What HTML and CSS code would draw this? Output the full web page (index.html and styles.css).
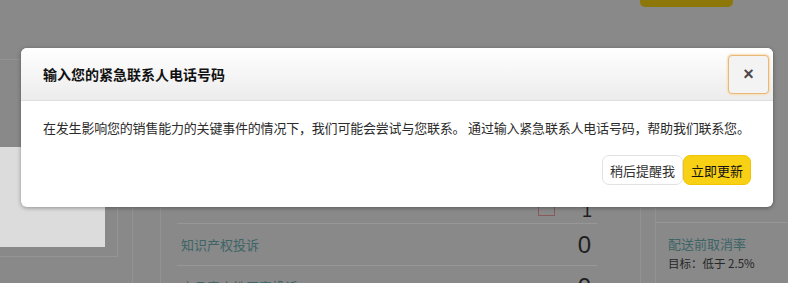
FILE: index.html
```html
<!DOCTYPE html>
<html lang="zh">
<head>
<meta charset="utf-8">
<link rel="stylesheet" href="styles.css">
</head>
<body>
<div class="page">
  <div class="topbar"><div class="top-btn"></div></div>
  <div class="cols">
    <div class="col-left">
      <div class="left-frame"><div class="light-box"></div></div>
    </div>
    <div class="gutter"></div>
    <div class="col-mid">
      <div class="mid-card">
        <div class="row row-first"><span class="flag"></span><span class="num small">1</span></div>
        <div class="row"><span class="link">知识产权投诉</span><span class="num">0</span></div>
        <div class="row"><span class="link">商品真实性买家投诉</span><span class="num">0</span></div>
      </div>
    </div>
    <div class="gutter2"></div>
    <div class="col-right">
      <div class="right-card">
        <div class="link">配送前取消率</div>
        <div class="target">目标：低于 2.5%</div>
      </div>
    </div>
  </div>
</div>

<div class="modal">
  <div class="modal-header">
    <h2 class="modal-title">输入您的紧急联系人电话号码</h2>
    <button class="close-btn">×</button>
  </div>
  <div class="modal-body">
    <p class="modal-text">在发生影响您的销售能力的关键事件的情况下，我们可能会尝试与您联系。 通过输入紧急联系人电话号码，帮助我们联系您。</p>
    <div class="actions">
      <button class="btn btn-later">稍后提醒我</button>
      <button class="btn btn-update">立即更新</button>
    </div>
  </div>
</div>
</body>
</html>
```

FILE: styles.css
```css
html, body {
  margin: 0;
  padding: 0;
}
body {
  width: 788px;
  height: 283px;
  overflow: hidden;
  background: #898989;
  font-family: "Noto Sans CJK SC", "Noto Sans", sans-serif;
  position: relative;
}
.page {
  width: 788px;
  height: 283px;
  overflow: hidden;
}
.topbar {
  height: 60px;
  position: relative;
  border-bottom: 1px solid #939393;
  box-sizing: border-box;
  width: 133px;
}
.top-btn {
  position: absolute;
  left: 640px;
  top: -6px;
  width: 93px;
  height: 13px;
  border-radius: 5px;
  background: #8c7708;
}
.cols {
  display: flex;
  height: 223px;
}
.col-left {
  width: 133px;
  border-right: 1px solid #939393;
  box-sizing: border-box;
  padding-top: 87px;
}
.left-frame {
  width: 118px;
  height: 110px;
  border-right: 1px solid #959595;
  border-bottom: 1px solid #959595;
  box-sizing: border-box;
}
.light-box {
  width: 105px;
  height: 100px;
  background: #dcdcdc;
}
.gutter {
  width: 27px;
  border-right: 1px solid #939393;
}
.col-mid {
  width: 479px;
  border-right: 1px solid #939393;
}
.mid-card {
  padding: 163px 43px 0 16px;
}
.row {
  display: flex;
  justify-content: space-between;
  align-items: center;
  height: 41px;
  border-top: 1px solid #979797;
  padding: 0 6px 0 4px;
}
.row-first {
  height: 24px;
  border-top: none;
  justify-content: flex-end;
  gap: 27px;
  margin-top: -24px;
  padding-right: 5px;
}
.flag {
  width: 15px;
  height: 9px;
  border: 1px solid #8a5a5a;
  border-top: none;
}
.link {
  font-size: 13px;
  color: #3d6466;
}
.num {
  font-family: "Liberation Sans", Arial, sans-serif;
  font-size: 24px;
  color: #1e1e1e;
}
.num.small {
  font-size: 18px;
}
.gutter2 {
  width: 14px;
  border-right: 1px solid #939393;
}
.col-right {
  flex: 1;
  padding-top: 162px;
}
.right-card {
  border-top: 1px solid #969696;
  padding: 11px 12px;
}
.target {
  font-size: 11.5px;
  color: #262626;
  margin-top: 2px;
}

.modal {
  position: absolute;
  left: 21px;
  top: 48px;
  width: 752px;
  height: 159px;
  background: #fff;
  border-radius: 6px;
  box-shadow: 0 1px 4px rgba(0, 0, 0, 0.35);
  overflow: hidden;
  display: flex;
  flex-direction: column;
}
.modal-header {
  height: 53px;
  box-sizing: border-box;
  display: flex;
  align-items: center;
  justify-content: space-between;
  padding: 0 4px 0 22px;
  background: linear-gradient(#ffffff, #ececec);
  border-bottom: 1px solid #dedede;
}
.modal-title {
  margin: 0;
  font-size: 14px;
  font-weight: 700;
  color: #111;
}
.close-btn {
  width: 41px;
  height: 39px;
  border: 1px solid #e8b878;
  box-shadow: 0 0 2px 1px #f7dcb4;
  border-radius: 4px;
  background: #f3f3f3;
  font-size: 18px;
  font-weight: 700;
  color: #4a4a4a;
  font-family: "Liberation Sans", Arial, sans-serif;
  padding: 0;
  line-height: 1;
}
.modal-body {
  padding: 17px 22px 0 22px;
}
.modal-text {
  margin: 0;
  font-size: 13px;
  line-height: 20px;
  color: #2b2b2b;
  letter-spacing: -0.2px;
  white-space: nowrap;
}
.actions {
  display: flex;
  justify-content: flex-end;
  margin-top: 17px;
}
.btn {
  height: 30px;
  font-family: "Noto Sans CJK SC", sans-serif;
  font-size: 13px;
  border-radius: 7px;
  padding: 0;
  cursor: pointer;
}
.btn-later {
  width: 81px;
  background: #fff;
  border: 1px solid #e2e2e2;
  color: #333;
}
.btn-update {
  width: 68px;
  background: #f8d014;
  border: 1px solid #f0c400;
  color: #111;
}
```
